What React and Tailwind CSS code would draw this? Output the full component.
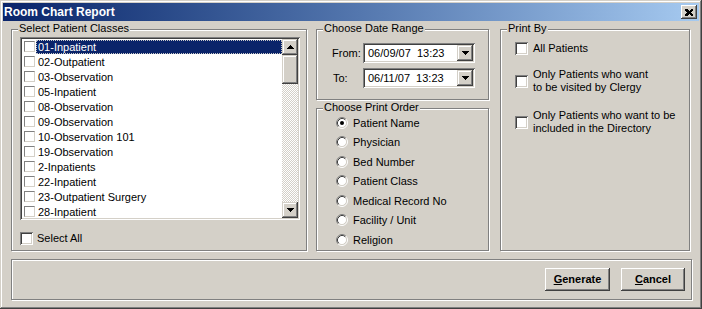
import React from 'react';

// Patient class list shown in the listbox
const PATIENT_CLASSES = [
  '01-Inpatient',
  '02-Outpatient',
  '03-Observation',
  '05-Inpatient',
  '08-Observation',
  '09-Observation',
  '10-Observation 101',
  '19-Observation',
  '2-Inpatients',
  '22-Inpatient',
  '23-Outpatient Surgery',
  '28-Inpatient',
];

const PRINT_ORDER = [
  'Patient Name',
  'Physician',
  'Bed Number',
  'Patient Class',
  'Medical Record No',
  'Facility / Unit',
  'Religion',
];

const RAISED =
  'bg-[#d4d0c8] shadow-[inset_-1px_-1px_#404040,inset_1px_1px_#d4d0c8,inset_-2px_-2px_#808080,inset_2px_2px_#ffffff]';
const BUTTON =
  'bg-[#d4d0c8] shadow-[inset_-1px_-1px_#404040,inset_1px_1px_#ffffff,inset_-2px_-2px_#808080,inset_2px_2px_#d4d0c8]';
const SUNKEN =
  'shadow-[inset_1px_1px_#808080,inset_-1px_-1px_#ffffff,inset_2px_2px_#404040,inset_-2px_-2px_#d4d0c8]';
const ETCHED = 'border border-[#808080] shadow-[inset_1px_1px_#ffffff,1px_1px_#ffffff]';

// Small black arrow for scroll / combo buttons
const Arrow = ({ up }) => (
  <svg width="7" height="4" viewBox="0 0 7 4" shapeRendering="crispEdges">
    <polygon points={up ? '3.5,0 7,4 0,4' : '0,0 7,0 3.5,4'} fill="#000" />
  </svg>
);

const Checkbox = () => <span className={`block w-[13px] h-[13px] shrink-0 bg-white ${SUNKEN}`} />;

const Radio = ({ checked }) => (
  <svg width="12" height="12" viewBox="0 0 12 12" className="shrink-0">
    <circle cx="6" cy="6" r="4.5" fill="#fff" />
    <path d="M2.11 9.89 A5.5 5.5 0 0 1 9.89 2.11" stroke="#808080" fill="none" />
    <path d="M9.89 2.11 A5.5 5.5 0 0 1 2.11 9.89" stroke="#ffffff" fill="none" />
    <path d="M2.82 9.18 A4.5 4.5 0 0 1 9.18 2.82" stroke="#404040" fill="none" />
    <path d="M9.18 2.82 A4.5 4.5 0 0 1 2.82 9.18" stroke="#d4d0c8" fill="none" />
    {checked && <circle cx="6" cy="6" r="2" fill="#000" />}
  </svg>
);

// Etched group box with caption sitting on the top border
const GroupBox = ({ title, className, children }) => (
  <div className={`relative ${ETCHED} ${className}`}>
    <span className="absolute top-[-8px] left-[6px] px-[1px] h-[13px] leading-[13px] bg-[#d4d0c8]">{title}</span>
    {children}
  </div>
);

const DateField = ({ value }) => (
  <div className={`flex w-[112px] h-[20px] p-[2px] bg-white ${SUNKEN}`}>
    <span className="flex-1 pl-[3px] leading-[16px] whitespace-pre">{value}</span>
    <span className={`w-[16px] h-[16px] flex items-center justify-center ${RAISED}`}>
      <Arrow />
    </span>
  </div>
);

const PushButton = ({ hot, rest }) => (
  <button className={`h-[23px] font-bold text-[11px] ${BUTTON}`}>
    <span className="underline">{hot}</span>
    {rest}
  </button>
);

export default function App() {
  return (
    <div className="w-[702px] h-[309px] p-[3px] bg-[#d4d0c8] font-['Liberation_Sans',Arial,sans-serif] text-[11px] text-black shadow-[inset_-1px_-1px_#404040,inset_1px_1px_#d4d0c8,inset_-2px_-2px_#808080,inset_2px_2px_#ffffff] overflow-hidden">
      {/* Title bar */}
      <div className="flex items-center h-[18px] pl-[1px] pr-[2px] bg-linear-to-r from-[#0a246a] to-[#a6caf0]">
        <span className="flex-1 text-white font-bold text-[12px] leading-[18px]">Room Chart Report</span>
        <span className={`w-[16px] h-[14px] flex items-center justify-center ${BUTTON}`}>
          <svg width="8" height="7" viewBox="0 0 8 7" shapeRendering="crispEdges">
            <path d="M0 0h2l2 2 2-2h2v1l-2 2.5 2 2.5v1h-2l-2-2-2 2h-2v-1l2-2.5-2-2.5z" fill="#000" />
          </svg>
        </span>
      </div>

      <div className="flex flex-col px-[8px] pt-[8px]">
        <div className="flex items-start">
          {/* Patient classes */}
          <GroupBox title="Select Patient Classes" className="w-[296px] h-[222px] pl-[8px] pt-[7px]">
            <div className={`flex w-[280px] h-[183px] p-[2px] bg-white ${SUNKEN}`}>
              <div className="flex-1 overflow-hidden">
                {PATIENT_CLASSES.map((name, idx) => (
                  <div key={name} className="flex items-center h-[15px] pl-[2px]">
                    <span className="block w-[11px] h-[11px] shrink-0 bg-white border border-[#808080] border-r-[#d4d0c8] border-b-[#d4d0c8]" />
                    {idx === 0 ? (
                      <span className="flex-1 ml-[1px] px-[1px] h-[14px] leading-[12px] bg-[#0a246a] text-white border border-dotted border-[#c8c8c8]">
                        {name}
                      </span>
                    ) : (
                      <span className="ml-[1px] px-[1px] border border-transparent leading-[12px]">{name}</span>
                    )}
                  </div>
                ))}
              </div>
              {/* Scrollbar */}
              <div className="flex flex-col w-[16px]">
                <span className={`h-[16px] flex items-center justify-center ${RAISED}`}>
                  <Arrow up />
                </span>
                <span className={`h-[29px] ${RAISED}`} />
                <span className="flex-1 bg-[repeating-conic-gradient(#d4d0c8_0%_25%,#ffffff_0%_50%)] bg-[length:2px_2px]" />
                <span className={`h-[16px] flex items-center justify-center ${RAISED}`}>
                  <Arrow />
                </span>
              </div>
            </div>
            <label className="flex items-center gap-[4px] mt-[10px]">
              <Checkbox />
              <span>Select All</span>
            </label>
          </GroupBox>

          {/* Date range and print order */}
          <div className="flex flex-col ml-[9px] w-[173px]">
            <GroupBox title="Choose Date Range" className="h-[71px] pl-[15px] pt-[13px]">
              <div className="flex flex-col gap-[5px]">
                <div className="flex items-center">
                  <span className="w-[31px]">From:</span>
                  <DateField value="06/09/07  13:23" />
                </div>
                <div className="flex items-center">
                  <span className="w-[31px] pl-[1px]">To:</span>
                  <DateField value="06/11/07  13:23" />
                </div>
              </div>
            </GroupBox>
            <GroupBox title="Choose Print Order" className="mt-[8px] h-[143px] pl-[19px] pt-[4px]">
              {PRINT_ORDER.map((label, idx) => (
                <label key={label} className="flex items-center gap-[5px] h-[19.5px]">
                  <Radio checked={idx === 0} />
                  <span>{label}</span>
                </label>
              ))}
            </GroupBox>
          </div>

          {/* Print by */}
          <GroupBox title="Print By" className="ml-[11px] w-[190px] h-[222px] pl-[14px] pt-[12px]">
            <label className="flex items-center gap-[5px] leading-[13px]">
              <Checkbox />
              <span>All Patients</span>
            </label>
            <label className="flex items-center gap-[5px] mt-[13px] leading-[13px]">
              <Checkbox />
              <span>
                Only Patients who want
                <br />
                to be visited by Clergy
              </span>
            </label>
            <label className="flex items-center gap-[5px] mt-[15px] leading-[13px]">
              <Checkbox />
              <span>
                Only Patients who want to be
                <br />
                included in the Directory
              </span>
            </label>
          </GroupBox>
        </div>

        {/* Button panel */}
        <div className={`flex items-center justify-end gap-[11px] mt-[8px] w-[681px] h-[41px] pr-[6px] ${ETCHED}`}>
          <div className="w-[65px] flex">
            <div className="flex-1 flex flex-col">
              <PushButton hot="G" rest="enerate" />
            </div>
          </div>
          <div className="w-[64px] flex flex-col">
            <PushButton hot="C" rest="ancel" />
          </div>
        </div>
      </div>
    </div>
  );
}
